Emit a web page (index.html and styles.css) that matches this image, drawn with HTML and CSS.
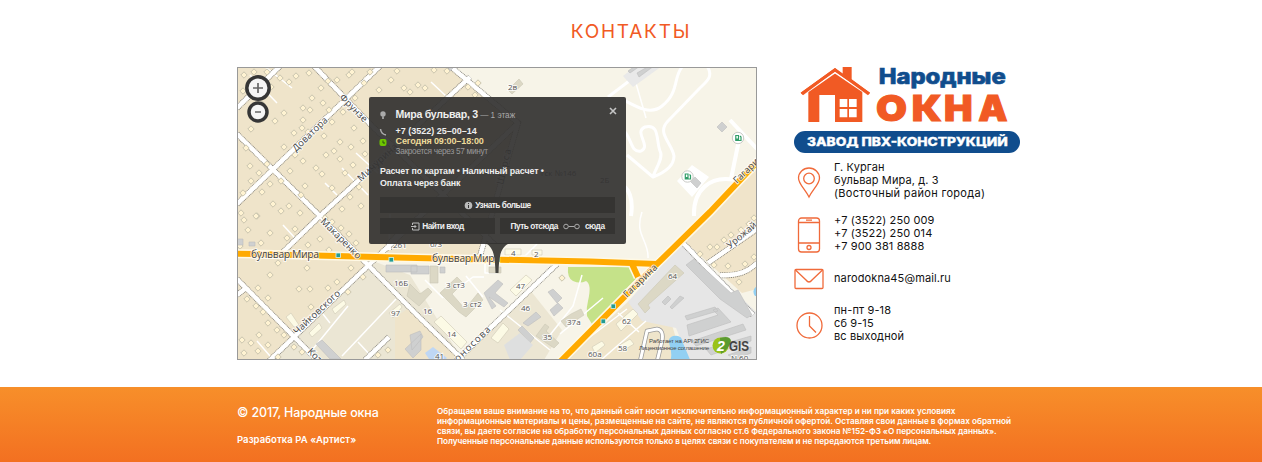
FILE: index.html
```html
<!DOCTYPE html>
<html lang="ru">
<head>
<meta charset="utf-8">
<title>Контакты</title>
<link rel="stylesheet" href="styles.css">
</head>
<body>
<section class="contacts">
  <h2 class="title">КОНТАКТЫ</h2>
  <div class="columns">
    <div class="map">
      <svg class="map-canvas" viewBox="238 68 518 291" width="518" height="291">
        <defs>
          <marker id="house" markerUnits="userSpaceOnUse" markerWidth="8" markerHeight="8" refX="4" refY="4"><path d="M4 .8L7.200 4L4 7.200L.8 4Z" fill="#fff3d2" stroke="#c9c4ae" stroke-width="1"/></marker>
        </defs>
        <rect x="237" y="66" width="522" height="296" fill="#f7f4e8"/>
        <path d="M237 66H450L518 123L480 256L373 261L270 362H237Z" fill="#efe4ca"/>
        <path d="M373 261L410 275L460 356V362H270Z" fill="#ebe6d4"/>
        <path d="M410 307L460 356V362H395V318Z" fill="#efe4ca"/>
        <path d="M458 359L530 290L562 330L544 360Z" fill="#ece6d3"/>
        <path d="M683 240L757 167V289L742 293Z" fill="#f0e4ca"/>
        <path d="M563 362L630 300L672 325L683 362Z" fill="#efe5cb"/>
        <path d="M682 240L756 312V362H690L676 328L642 321L628 302Z" fill="#e6e6e6"/>
        <path d="M568 267H632L636 279L592 324L587 316Q586 308 588 301Q592 284 586 281Q580 284 573 281Q567 278 568 267Z" fill="#c5e289"/>
        <path d="M670 362C675 348 663 340 673 336Q682 334 683 343L691 362ZM757 286Q751 290 755 296H757Z" fill="#92d0f3"/>

        <g class="lane">
          <path d="M608 97L649 66M620 98C635 106 650 116 662 106C680 92 673 75 683 66M707 66C715 78 704 83 698 90L668 121C656 133 672 143 674 156Q674 169 653 177L627 155M625 132C632 140 631 153 641 151C652 146 633 132 645 127C660 123 656 141 660 151C664 158 655 169 653 177" stroke-width="3"/>
          <path d="M730 120L757 149M739 140L731 179M735 180C710 175 693 190 694 216M625 187Q634 196 631 216" stroke-width="4"/>
          <path d="M631 66L646 118M642 212C634 235 649 240 648 258M582 275L573 306L550 335"/>
          <path d="M264 66L292 88M250 75L277 103M356 153L378 173M342 168L368 195M325 183L337 195M283 225L295 238M431 82L446 96M308 355L348 306M342 356L396 299M358 342L371 356M323 314L330 323M257 341L270 356M425 280L443 298M444 298L473 277H484M466 276L483 297M500 310L550 350M485 255V273H497M537 244L525 256H497M390 214L389 250"/>
          <path d="M618 313L639 332M560 334L603 298M570 352L627 309M601 360L646 321"/>
          <path d="M640 362L647 331L657 329Q664 330 662 341L657 362" class="cased"/>
          <path d="M640 362L647 331L657 329Q664 330 662 341L657 362" stroke-width="3"/>
        </g>
        <path d="M623 76L636 66H662L633 87Z" fill="#e9e9e9"/>
        <path d="M677 181L692 165L709 177L692 197Z" fill="#fff"/>

        <g class="casing"><path id="roads" d="M237 204L380 66M314 66L370 124L495 245M237 134L320 216L417 315L463 360M283 252L320 216L470 77M237 279L319 362M268 362L373 261L518 123M237 295L246 288M237 108L280 66M455 362L557 264M365 360L389 337M450 66L518 123L480 256M682 242L753 315M708 263L757 229M720 275Q743 277 757 263M389 250V244L405 228"/></g>
        <use href="#roads" class="road"/>

        <polyline class="houses" points="243,91 244,75 254,72 267,72 280,78 289,82 271,87 262,104 257,119 275,121 251,129 284,113 303,108 312,98 321,88 328,81 296,76 309,73 337,80 349,75 352,72 370,72 391,80 397,71 364,83 379,90 404,88 355,98 323,103 310,110 329,110 343,112 303,120 332,122 320,125 354,128 302,128 294,133 308,132 324,136 284,147 340,142 351,147 363,141 295,155 334,151 303,161 326,155 316,168 340,159 353,165 365,154 246,148 250,166 259,173 267,164 251,181 243,193 270,184 281,181 290,171 305,186 322,174 332,188 345,173 350,197 359,187 262,192 273,204 289,206 301,195 300,213 342,209 361,206 241,213 257,216 281,211"/>
        <polyline class="houses" points="244,220 256,216 248,230 261,243 270,233 287,238 295,229 308,245 325,218 332,222 341,228 320,239 349,234 356,243 329,250 240,246 278,263 270,275 307,268 299,289 310,289 337,282 328,288 351,268 363,277 258,288 268,298 247,299 256,306 263,312 268,323 277,330 284,335 311,307 348,292 259,335 251,343 242,340 244,353 258,351 268,345 278,357 294,347 302,352 388,350 378,355"/>
        <polyline class="houses" points="418,85 410,92 425,88 434,70 468,87 475,95 478,83 447,71 700,254 710,247 717,247 724,240 731,235 741,230 749,224 754,218 714,265 728,266 739,282 745,264 754,257 562,278"/>

        <g class="building">
          <path d="M430 266H438V283H430ZM489 267H501V273H489ZM410 284L420 294L428 288L432 292L419 306L407 296ZM440 293L457 277L463 283L452 294L465 309L478 293L483 300L466 317L459 312ZM508 90L519 79L523 84L512 94ZM536 336L545 324L549 327L546 331L559 343L554 348ZM561 321L571 314L581 309L584 315L566 327ZM638 304L675 265L684 273L648 305L650 308L645 313Z"/>
        </g>
        <g class="building light">
          <path d="M510 290L526 275L532 280L516 296ZM434 322L441 316L467 342L461 349ZM491 338L503 323L509 329L498 343ZM286 317L291 313L299 325L294 327ZM332 309L344 300L346 304L335 314ZM309 333L319 323L322 328L312 337ZM389 313L400 304L402 307L393 318ZM505 249H521V255H505ZM532 250H542V255H532ZM616 324L633 309L638 314L621 331ZM592 347L602 341L605 345L595 353ZM618 346L630 339L634 344L624 350Z"/>
        </g>
        <g class="building gray">
          <path d="M237 239H243V245H237ZM249 242H255V246H249ZM411 266H429V274H411ZM386 265H417V272H386ZM440 267H445V273H440ZM484 293L498 280L503 284L495 293L508 303L504 307L489 297L496 306L492 309ZM548 292L553 289L562 298L557 303ZM550 310L558 303L563 308L554 316ZM523 323L536 312L541 317L528 326ZM518 330L522 326L534 338L530 343ZM316 344L322 340L341 359H330ZM405 349L421 334V350L413 358ZM410 335L420 331L423 337L412 350ZM448 66H455L450 71ZM628 71L635 66H640L630 73ZM637 73L649 66H654L639 77ZM717 127L722 122L727 127L722 132ZM690 181L695 177L701 183L697 188ZM686 265L694 259L731 293L738 290L752 315L747 318L720 299ZM670 307L680 296L684 298L672 309ZM662 302L668 296L671 299L665 305ZM685 316L715 307L718 311L687 320ZM687 325L718 315L713 310L718 308L731 322L689 336ZM692 341L743 324L746 330L696 346ZM706 349L751 336V341L711 355ZM728 355L751 347V353L736 359Z"/>
        </g>
        <path d="M425 353L433 347L447 358L443 362H431Z" fill="#bfd7f4"/>
        <path d="M504 345L520 333L533 345L520 360H510Z" fill="#dedfdf"/>

        <g class="main-road outline"><path id="main" d="M232 253.500L417 258L590 261.500L657 264L710 212L760 159M560 362L657 264M632 264L638 277"/></g>
        <use href="#main" class="main-road"/>

        <g class="label street">
          <text transform="translate(339 98) rotate(45)" textLength="35">Фрунзе</text>
          <text transform="translate(296 152) rotate(-44)" textLength="45">Доватора</text>
          <text transform="translate(361 182) rotate(-43)" textLength="51">Мичурина</text>
          <text transform="translate(320 222) rotate(45)" textLength="53">Макаренко</text>
          <text transform="translate(297 335) rotate(-43)" textLength="60">Чайковского</text>
          <text transform="translate(307 352) rotate(45)">Кот</text>
          <text transform="translate(458 362) rotate(-44)" textLength="46">оносова</text>
          <text transform="translate(627 298) rotate(-44)" textLength="43">Гагарина</text>
          <text transform="translate(737 184) rotate(-44)">Гагари</text>
          <text transform="translate(730 249) rotate(-40)">Урожай</text>
          <text transform="translate(503 185) rotate(-77)" textLength="36">Шорса</text>
        </g>
        <g class="label boulevard">
          <text x="251" y="258" textLength="68">бульвар Мира</text>
          <text x="432" y="262" textLength="68">бульвар Мира</text>
        </g>
        <g class="label number">
          <text x="508" y="90">2в</text><text x="393" y="248">261</text><text x="430" y="247">6/3</text><text x="511" y="256">4</text><text x="534" y="257">2</text>
          <text x="394" y="286">16Б</text><text x="391" y="316">97</text><text x="446" y="288">3 ст3</text><text x="463" y="307">3 ст2</text><text x="423" y="314">16</text><text x="447" y="337">14</text><text x="435" y="359">41</text><text x="516" y="289">47</text><text x="521" y="311">46</text><text x="567" y="325">37а</text><text x="543" y="340">35</text><text x="668" y="279">64</text><text x="622" y="324">62</text><text x="618" y="351">58</text><text x="588" y="357">60а</text><text x="731" y="361">N 60</text><text x="541" y="176">гск №146</text><text x="600" y="183">2Б</text>
        </g>
        <g fill="#259b91" stroke="#d9f2ef" stroke-width=".8">
          <rect x="336" y="253" width="4.500" height="4.500"/><rect x="389" y="257.500" width="4.500" height="4.500"/><rect x="601" y="319" width="4.500" height="4.500"/><rect x="611" y="304" width="4.500" height="4.500"/>
        </g>
        <g id="fuel"><circle cx="687.500" cy="176.500" r="5.700" fill="#fff" stroke="#c9cac5"/><path d="M685.300 174H688V179H685.300ZM689.500 174.500L690.500 175.500V179H688.500" fill="none" stroke="#319d68" stroke-width="1.2"/><path d="M685.300 177H688V179H685.300Z" fill="#319d68"/></g>
        <use href="#fuel" x="50.500" y="-38.500"/>
        <path d="M485 243C494 247 495 257 495.500 273H498.500C499 257 500 247 510 243Z" fill="#454440"/>
        <g class="zoom-control"><circle cx="258" cy="88" r="11.200"/><circle cx="258" cy="112" r="9"/></g>
        <path d="M253 88H263M258 83V93M255 112H261" stroke="#666" stroke-width="1.7"/>
        <g class="copyright"><text x="649" y="343" textLength="60">Работает на API 2ГИС</text><text x="639" y="350" textLength="70">Лицензионное соглашение</text></g>
        <circle cx="720.500" cy="345.500" r="8" fill="#9ac319"/><path d="M720 338Q730 335 731 341Q729 349 721 354Z" fill="#5b9b2e"/>
        <text x="717" y="351" class="gis two">2</text><text x="729" y="351" class="gis" textLength="20" lengthAdjust="spacingAndGlyphs">GIS</text>
      </svg>
      <div class="popup">
        <svg class="popup-icons" viewBox="0 0 10 48" width="10" height="48"><circle cx="5" cy="6" r="2.700" fill="#aaa"/><path d="M4 8H6V11H4Z" fill="#999"/><path d="M2.500 21Q3 26 8 27" fill="none" stroke="#aaa" stroke-width="1.500"/><rect x="1.500" y="31" width="7" height="7" rx="2" fill="#6ec600"/><path d="M5 32.500V35H7" fill="none" stroke="#2c5310"/></svg>
        <svg class="close" viewBox="0 0 8 8" width="8" height="8"><path d="M1 1L7 7M7 1L1 7" stroke="#c5c5c5" stroke-width="1.600"/></svg>
        <div class="popup-info">
          <p class="place"><b>Мира бульвар, 3</b><span> — 1 этаж</span></p>
          <p class="phone">+7 (3522) 25–00–14</p>
          <p class="hours">Сегодня 09:00–18:00</p>
          <p class="closing">Закроется через 57 минут</p>
        </div>
        <p class="payment">Расчет по картам • Наличный расчет •<br>Оплата через банк</p>
        <div class="popup-buttons">
          <span class="btn wide"><svg viewBox="0 0 9 9" width="9" height="9"><circle cx="4.500" cy="4.500" r="3.800" fill="#bbb"/><path d="M4.500 4V7M4.500 2V3" stroke="#333"/></svg>Узнать больше</span>
          <span class="btn"><svg viewBox="0 0 9 9" width="9" height="9" fill="none" stroke="#bbb"><path d="M1.500 3V1H8V8H1.500V6M0 4.500H5M3.500 3L5 4.500L3.500 6"/></svg>Найти вход</span>
          <span class="btn route">Путь отсюда<svg viewBox="0 0 17 7" width="17" height="7" fill="none" stroke="#aaa"><circle cx="3" cy="3.500" r="2.300"/><circle cx="14" cy="3.500" r="2.300"/><path d="M5.500 3.500H11.500"/></svg>сюда</span>
        </div>
      </div>
    </div>
    <aside class="details">
      <svg class="logo" viewBox="27 18 678 264" width="226" height="88">
        <path d="M150 24L173 43V21H200V58L255 98L249 106L232 93V186H70V93L54 106L47 98Z" fill="#f15a24"/>
        <path d="M52 106L150 38L251 106" fill="none" stroke="#fff" stroke-width="5"/>
        <path d="M47 98L150 24L255 98L249 106L150 34L54 106Z" fill="#f15a24"/>
        <path d="M103 105H150V186H103ZM164 117H187V141H164ZM192 117H215V141H192ZM164 147H187V172H164ZM192 147H215V172H192Z" fill="#fff"/>
        <text x="281" y="72" class="logo-name" textLength="381" lengthAdjust="spacingAndGlyphs">Народные</text>
        <g class="logo-main">
          <text x="273" y="184" textLength="93" lengthAdjust="spacingAndGlyphs">О</text>
          <text x="380" y="184" textLength="90" lengthAdjust="spacingAndGlyphs">К</text>
          <text x="477" y="184" textLength="86" lengthAdjust="spacingAndGlyphs">Н</text>
          <text x="580" y="184" textLength="88" lengthAdjust="spacingAndGlyphs">А</text>
        </g>
        <rect x="27" y="213" width="678" height="66" rx="33" fill="#104d8d"/>
        <text x="66" y="258" class="logo-sub" textLength="602" lengthAdjust="spacingAndGlyphs">ЗАВОД ПВХ-КОНСТРУКЦИЙ</text>
      </svg>
      <div class="row">
        <svg class="icon" viewBox="0 0 30 39" width="30" height="39"><path d="M15 36C11 28 4.500 23 4.500 17A10.500 10 0 0 1 25.500 17C25.500 23 19 28 15 36Z"/><circle cx="15" cy="17.500" r="5.300"/></svg>
        <p>Г. Курган<br><span class="l2">бульвар Мира, д. 3</span><br><span class="l3">(Восточный район города)</span></p>
      </div>
      <div class="row phones">
        <svg class="icon" viewBox="0 0 30 39" width="30" height="39"><rect x="4.500" y="4" width="21" height="34" rx="3"/><path d="M4.500 8.500H25.500M4.500 29H25.500M12 6.200H18"/><circle cx="15" cy="33.500" r="2"/></svg>
        <p>+7 (3522) 250 009<br>+7 (3522) 250 014<br>+7 900 381 8888</p>
      </div>
      <div class="row mail">
        <svg class="icon" viewBox="0 0 30 24" width="30" height="24"><rect x="1" y="2.500" width="28" height="19" rx="1"/><path d="M1.500 3L12 13Q15 17 18 13L28.500 3"/></svg>
        <p>narodokna45@mail.ru</p>
      </div>
      <div class="row time">
        <svg class="icon" viewBox="0 0 30 39" width="30" height="39"><circle cx="15.500" cy="21.500" r="12.500"/><path d="M15.500 12V22L22 28.500"/></svg>
        <p>пн-пт 9-18<br>сб 9-15<br>вс выходной</p>
      </div>
    </aside>
  </div>
</section>
<footer class="footer">
  <div class="company"><p class="copy">© 2017, Народные окна</p><p class="dev">Разработка РА «Артист»</p></div>
  <p class="legal"><span class="a">Обращаем ваше внимание на то, что данный сайт носит исключительно информационный характер и ни при каких условиях</span><span class="b">информационные материалы и цены, размещенные на сайте, не являются публичной офертой. Оставляя свои данные в формах обратной</span><span class="c">связи, вы даете согласие на обработку персональных данных согласно ст.6 Федерального закона №152-ФЗ «О персональных данных».</span><span class="d">Полученные персональные данные используются только в целях связи с покупателем и не передаются третьим лицам.</span></p>
</footer>
</body>
</html>
```

FILE: styles.css
```css
* { box-sizing: border-box; }
body { margin: 0; background: #fff; font-family: Inter, "Liberation Sans", sans-serif; color: #111; overflow: hidden; }
h2, p { margin: 0; }
.contacts { height: 387px; padding-top: 20px; }
.title { height: 24px; line-height: 24px; font-size: 19px; font-weight: 400; text-align: center; color: #f15a24; letter-spacing: 1.75px; }
.columns { width: 788px; margin: 22px auto 0; display: flex; gap: 37px; }
.map { position: relative; width: 520px; height: 293px; margin-top: 1px; border: 1px solid #999; overflow: hidden; flex: none; }
.map-canvas { display: block; }
.lane { fill: none; stroke: #fff; stroke-width: 1.5; stroke-linejoin: round; }
.cased { stroke: #999; stroke-width: 4.5; }
.casing { fill: none; stroke: #85837d; stroke-width: 6; stroke-dasharray: 1 .8; }
.road { fill: none; stroke: #fff; stroke-width: 4.4; }
.houses { fill: none; stroke: none; marker: url(#house); }
.building { fill: #dcd8c5; stroke: #cbc7b5; stroke-width: .6; }
.building.light { fill: #fcfae5; stroke: #cecab6; }
.building.gray { fill: #cfd0d0; stroke: #bdbebe; }
.main-road { fill: none; stroke: #ffaa00; stroke-width: 6; }
.main-road.outline { stroke: #fff9e5; stroke-width: 9; }
.label { font-family: "Open Sans", sans-serif; fill: #444; stroke: #fff; stroke-width: 2; stroke-opacity: .75; paint-order: stroke; }
.street { font-size: 9.5px; }
.boulevard { font-size: 10.5px; }
.number { font-size: 8px; fill: #555; }
.zoom-control { fill: #f5f5f5; stroke: #363636; stroke-width: 3.5; }
.copyright { font: 6px "Liberation Sans", sans-serif; fill: #444; }
.gis { font: bold 15px "Liberation Sans", sans-serif; fill: #444; }
.gis.two { font-style: italic; fill: #fff; font-size: 14px; }
.popup { position: absolute; left: 131px; top: 29px; width: 257px; height: 147px; padding: 10px 11px; border-radius: 2px; background: rgba(52, 51, 49, .93); color: #eee; font-family: "Liberation Sans", sans-serif; font-weight: 700; }
.popup-icons { position: absolute; left: 9px; top: 11px; }
.close { position: absolute; right: 9px; top: 10px; }
.popup-info { margin-left: 15.5px; }
.popup-info p { white-space: nowrap; }
.place { height: 19px; line-height: 15px; font-size: 10.6px; letter-spacing: -.28px; }
.place span { font-size: 8.2px; font-weight: 400; color: #aaa; letter-spacing: 0; }
.phone, .hours { height: 10px; line-height: 11px; font-size: 9px; }
.hours { color: #eedb9a; letter-spacing: -.12px; }
.closing { height: 10px; line-height: 10px; font-size: 8.3px; font-weight: 400; color: #999; letter-spacing: -.32px; }
.payment { margin-top: 9px; line-height: 12px; font-size: 8.9px; letter-spacing: -.1px; white-space: nowrap; }
.popup-buttons { display: grid; grid-template-columns: 115px 115px; gap: 5px; margin-top: 8px; }
.btn { height: 16px; display: flex; align-items: center; justify-content: center; gap: 2px; font-size: 8.3px; letter-spacing: -.55px; background: #353432; white-space: nowrap; }
.btn.wide { grid-column: 1 / 3; letter-spacing: -.5px; }
.btn.route { gap: 5px; letter-spacing: -.45px; }
.details { width: 231px; flex: none; }
.logo { display: block; }
.logo-name { font: 800 64px Inter, sans-serif; fill: #104d8d; stroke: #104d8d; stroke-width: 2; }
.logo-main { font: 900 107px Inter, sans-serif; fill: #f15a24; stroke: #f15a24; stroke-width: 3; }
.logo-sub { font: 800 34px Inter, sans-serif; fill: #fff; stroke: #fff; stroke-width: 1; }
.row { display: flex; gap: 10px; margin-top: 7px; font-size: 11px; line-height: 13px; letter-spacing: .12px; white-space: nowrap; align-items: center; }
.l3 { letter-spacing: .32px; }
.phones { margin-top: 14px; }
.mail { margin-top: 14px; height: 24px; }
.mail p { padding-bottom: 2px; }
.time { margin-top: 13px; }
.icon { fill: none; stroke: #f06a3a; stroke-width: 1.3; flex: none; }
.footer { height: 75px; background: linear-gradient(#f78f2a, #f37021); color: #fff; padding: 18px 0 0 237px; display: flex; }
.company { width: 200px; font-weight: 500; }
.copy { font-size: 12.5px; line-height: 16px; letter-spacing: -.15px; }
.dev { margin-top: 13px; font-size: 9.5px; line-height: 12px; font-weight: 600; letter-spacing: .08px; }
.legal { font-size: 8.2px; font-weight: 600; line-height: 10px; padding-top: 1px; }
.legal span { display: block; white-space: nowrap; }
.legal .a, .legal .b { letter-spacing: .015px; }
.legal .c, .legal .d { letter-spacing: -.035px; }
```
